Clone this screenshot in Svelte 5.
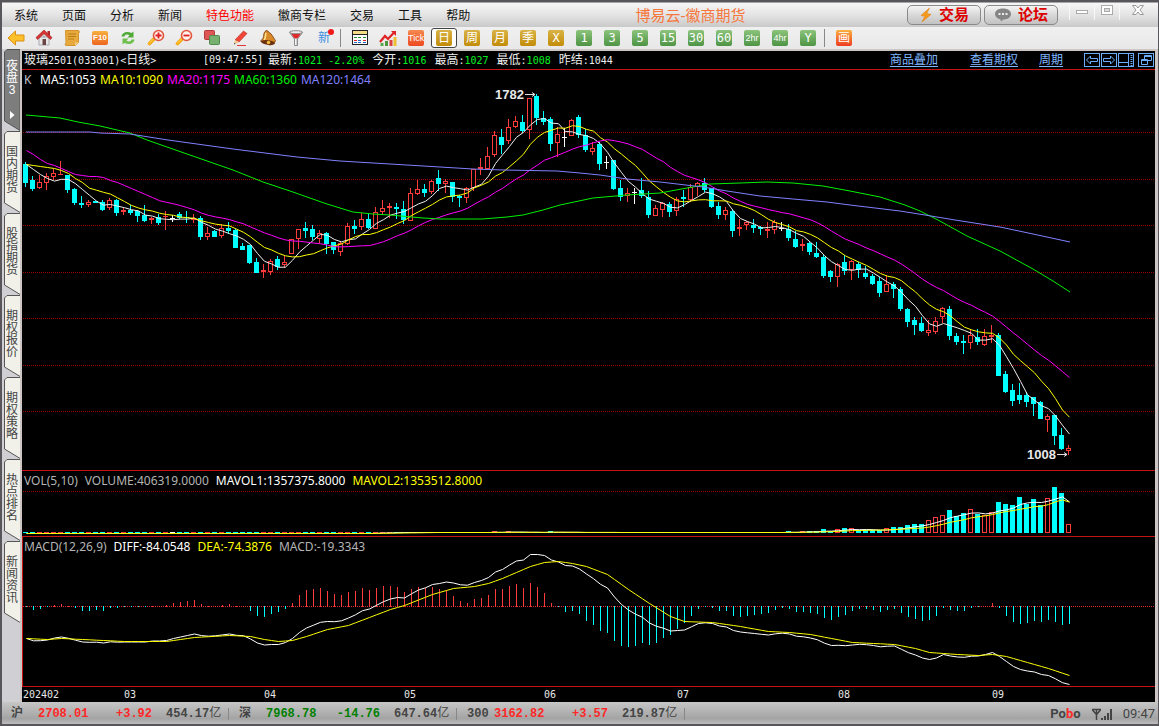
<script>
  const menus = ['系统', '页面', '分析', '新闻', '特色功能', '徽商专栏', '交易', '工具', '帮助'];
  const tools = ['后退', '首页', '便签', 'F10', '刷新', '放大', '缩小', '叠加', '画线', '预警', '筛选', '新'];
  const periods = [
    ['Tick', 'tick'], ['日', 'gold'], ['周', 'gold'], ['月', 'gold'], ['季', 'gold'], ['X', 'gold'],
    ['1', 'green'], ['3', 'green'], ['5', 'green'], ['15', 'green'], ['30', 'green'], ['60', 'green'],
    ['2hr', 'green'], ['4hr', 'green'], ['Y', 'green']
  ];
  const tabs = ['国内期货', '股指期货', '期权报价', '期权策略', '热点排名', '新闻资讯'];
  const quotes = [['最新:', '1021 -2.20%', 'up'], ['今开:', '1016', 'up'], ['最高:', '1027', 'up'], ['最低:', '1008', 'up'], ['昨结:', '1044', '']];
  const indexes = [
    ['沪', '2708.01', '+3.92', '454.17', 'rise'],
    ['深', '7968.78', '-14.76', '647.64', 'fall'],
    ['300', '3162.82', '+3.57', '219.87', 'rise']
  ];
  const months = [[1, '202402'], [102, '03'], [242, '04'], [382, '05'], [522, '06'], [655, '07'], [816, '08'], [970, '09']];

  // kind, high, body top, body bottom, low
  const bars = `c162,164,183,187 c176,180,189,191 r175,182,188,189 r173,176,183,190 r169,173,177,180 r161,174,175,175 c175,175,190,193 c188,189,203,205 c196,203,205,208 r200,202,205,207
c201,201,203,203 c200,202,210,211 r198,200,208,210 c199,200,213,216 r208,210,212,215 c205,210,213,215 c210,211,216,222 c205,215,221,222 r217,218,220,224 c214,217,223,225
r211,216,217,230 w215,218,219,222 c212,214,218,219 c211,217,218,223 r214,218,220,223 c216,218,237,240 r227,233,237,240 c230,231,237,237 r224,228,236,238 c222,228,231,234
c229,230,248,248 c243,246,250,250 c245,245,263,264 c258,262,273,273 r264,270,272,278 r259,261,272,275 c256,259,267,270 r256,262,265,268 r239,239,254,254 r229,229,239,249
c222,228,231,238 c225,229,237,240 r230,233,239,243 c232,233,244,254 c242,242,250,254 r241,243,252,256 r223,226,244,245 c220,226,229,234 r213,219,227,230 c214,219,228,229
r207,212,229,229 r200,208,212,215 r203,206,208,218 c203,207,209,219 c201,209,220,224 r188,193,221,221 r180,189,194,195 c184,189,193,197 r180,181,192,194 c170,178,184,191
r179,181,184,193 c182,182,197,202 c195,196,198,207 r187,188,198,203 r169,169,188,191 r158,167,169,175 r147,156,169,169 r131,135,155,157 c129,137,145,154 r119,127,141,144
r116,121,127,128 c115,122,131,133 r98,98,130,139 c94,96,118,125 c111,118,122,125 c117,119,144,151 r127,134,143,157 w128,137,138,147 r119,120,136,136 c115,117,135,138
c129,135,150,152 r142,148,152,155 c142,144,164,170 w156,162,163,169 c160,160,189,190 c180,188,197,201 r188,193,196,202 w188,192,193,204 c178,190,196,198 c191,197,215,218
r205,208,216,216 r202,203,210,217 c202,204,212,217 r197,199,211,216 c190,197,199,207 r184,187,200,202 r182,183,187,196 c178,183,190,192 c188,188,207,208 c202,206,215,219
r207,210,215,220 c209,211,231,237 r219,227,229,236 r221,222,225,230 c219,225,228,233 c226,227,229,235 r222,229,231,238 r220,222,230,234 w222,228,229,231 c224,229,238,241
c231,239,247,248 r239,244,246,251 c242,243,252,255 c242,253,257,258 c255,257,276,278 c270,271,277,282 r263,264,277,287 c255,262,271,275 r260,261,270,280 c262,264,270,278
c266,273,277,279 c274,276,284,285 c277,281,293,297 r275,284,292,292 c282,284,289,298 c287,289,309,311 c308,309,322,327 c317,320,325,335 c317,323,331,332 r320,330,333,336
r317,321,332,334 r307,308,317,323 c306,309,336,340 c333,336,342,345 c335,341,343,354 r329,335,343,349 c329,337,342,345 r329,336,345,346 r325,335,337,343 c333,335,376,376
c371,374,392,393 c384,390,401,406 c383,395,400,404 c392,395,402,407 c397,397,404,416 c401,402,419,419 r414,416,420,432 c415,415,436,445 c428,435,449,450 r445,448,451,455`
    .split(/\s+/)
    .map((s, i) => {
      const [high, top, bottom, low] = s.slice(1).split(',').map(Number);
      return { kind: s[0], high, top, bottom, low, x: 3 + 7 * i };
    });
  const colors = { c: '#00ffff', r: '#ff3c3c', w: '#ffffff' };

  const volTail = [2, 1, 2, 2, 2, 4, 2, 4, 5, 5, 3, 3, 3, 3, 5, 6, 6, 8, 9, 9, 13, 16, 18, 23, 17, 20, 24, 19, 18, 21, 31, 29, 28, 36, 29, 34, 28, 35, 46, 40, 9];
  const volumes = bars.map((_, i) => (i >= 109 ? volTail[i - 109] : [67, 69, 75].includes(i) ? 2 : i < 50 ? 0 : 1));

  const macd = [0, -4, -3, -1, 2, 3, 1, -2, -5, -5, -4, -5, -2, -2, -1, -1, -1, -1, 1, 1, 2, 4, 5, 6, 7, 3, 1, 1, 2, 3, 1, 1, -5, -10, -11, -8, -6, -3,
    4, 12, 17, 18, 19, 16, 13, 12, 15, 16, 19, 17, 19, 21, 21, 20, 15, 18, 20, 19, 20, 18, 17, 11, 6, 4, 8, 9, 12, 18, 18, 21, 23, 19, 24, 20, 14, 4,
    -1, -6, -5, -8, -15, -19, -25, -27, -35, -40, -41, -40, -37, -39, -37, -32, -29, -23, -17, -10, -3, -1, -2, -5, -5, -10, -11, -10, -9, -8, -7, -4, -2, -3,
    -6, -6, -7, -8, -12, -14, -11, -9, -5, -3, -3, -4, -6, -4, -3, -7, -11, -13, -15, -14, -10, -2, -4, -5, -5, -2, -1, 1, 4, -2, -10, -16, -18, -17, -15, -16, -14, -16, -19, -18];
  const deaKeys = [[0, 638], [3, 639], [5, 638], [8, 639], [11, 640], [14, 641], [20, 641], [24, 637], [29, 635], [32, 636], [34, 639], [36, 641], [38, 640], [40, 636], [43, 629], [46, 625],
    [49, 617], [52, 609], [54, 605], [58, 594], [61, 588], [64, 586], [66, 583], [68, 578], [70, 572], [72, 566], [74, 562], [76, 561], [78, 563], [80, 566], [83, 574], [86, 589],
    [89, 603], [92, 616], [94, 621], [98, 622], [102, 626], [106, 631], [109, 632], [112, 634], [115, 638], [118, 642], [121, 643], [124, 644], [127, 648], [129, 652], [133, 654],
    [136, 655], [138, 654], [140, 656], [143, 662], [146, 668], [149, 675]];
  const dea = bars.map((_, i) => {
    const k = Math.max(1, deaKeys.findIndex((d) => d[0] >= i));
    const [a, ya] = deaKeys[k - 1];
    const [b, yb] = deaKeys[k];
    return ya + ((yb - ya) * (i - a)) / (b - a);
  });

  const closes = bars.map((b) => (b.kind === 'c' ? b.bottom : b.top));
  const average = (list, n, lead = []) =>
    list.map((_, i) => {
      if (i < lead.length) return lead[i];
      const part = list.slice(Math.max(0, i - n + 1), i + 1);
      return part.reduce((s, v) => s + v, 0) / part.length;
    });
  const line = (list) => list.map((y, i) => `${4.5 + 7 * i},${(y + 0.5).toFixed(1)}`).join(' ');

  const ma5 = line(average(closes, 5, [164, 169, 174, 178]));
  const ma10 = line(average(closes, 10, [164, 165, 166, 167, 168, 170, 173, 178, 182]));
  const ma20 = line(average(closes, 20, [150, 154, 159, 163, 165, 168, 171, 174, 175, 176, 176, 177, 180, 182, 185, 188, 191, 194, 197]));
  const ma60 = '4,115 38,118 56,122 78,126 108,133 125,140 165,154 211,170 241,182 268,191 285,197 305,204 331,212 351,214 368,215 401,218 418,219 460,219 485,217 501,215 521,210 538,205 571,198 605,195 638,193 665,188 688,184 718,183 745,182 771,183 801,186 828,191 858,197 883,205 898,211 916,220 945,236 978,251 1011,269 1031,281 1048,292';
  const ma120 = '4,132 68,132 78,133 108,134 146,140 211,149 275,157 318,161 368,164 418,167 451,169 481,170 535,171 558,173 578,175 605,179 638,182 681,187 705,191 738,196 771,199 805,202 828,205 878,211 903,215 933,220 978,227 1011,234 1048,242';
  const mav1 = line(average(volumes, 5).map((v) => 533 - v));
  const mav2 = line(average(volumes, 10).map((v) => 533 - v));
  const deaLine = line(dea);
  const diffLine = line(dea.map((y, i) => y - macd[i] / 2));
</script>

<div class="window">
  <header class="titlebar">
    <nav>
      {#each menus as m}<button class:hot={m === '特色功能'}>{m}</button>{/each}
    </nav>
    <h1>博易云-徽商期货</h1>
    <div class="actions">
      <button class="pill"><svg width="14" height="16" viewBox="0 0 14 16"><path d="M10.500 1 2 8.500l4 .8L3 15l9-7.600-4.300-.8z" fill="#f59a1c" stroke="#e08010" stroke-width=".6" /></svg>交易</button>
      <button class="pill"><svg width="18" height="16" viewBox="0 0 18 16"><path d="M9 1.500c4.700 0 8 2.200 8 5.500s-3.300 5.500-8 5.500l-1.500 2-1.500-2.300C3 11.500 1 9.700 1 7c0-3.300 3.300-5.500 8-5.500z" fill="#858585" /><path d="M4.500 6h2v2h-2zM8 6h2v2H8zM11.500 6h2v2h-2z" fill="#eee" /></svg>论坛</button>
    </div>
    <div class="controls">
      <button aria-label="最小化"><svg width="14" height="14"><rect x="1.500" y="7.500" width="11" height="3" fill="#fff" stroke="#aaa" /></svg></button>
      <button aria-label="还原"><svg width="14" height="14"><rect x="1.500" y="2.500" width="11" height="9" fill="#fff" stroke="#aaa" /><rect x="4.500" y="5.500" width="5" height="3" fill="#ddd" stroke="#aaa" /></svg></button>
      <button class="close" aria-label="关闭"><svg width="14" height="14"><path d="M1.500 2.500h3.500l2 2.500 2-2.500h3.500L9 7l3.500 4.500H9L7 9l-2 2.500H1.500L5 7z" fill="#fff" stroke="#999" /></svg></button>
    </div>
  </header>

  <div class="toolbar">
    {#each tools as t, i}
      <button class="tool" aria-label={t}>
        {#if i === 11}
          <span class="new">新</span><i class="dot"></i>
        {:else if i === 3}
          <span class="f10">F10</span>
        {:else}
          <svg width="18" height="18" viewBox="0 0 18 18">
            {#if i === 0}
              <path d="M1 9 8.500 2v4H17v6H8.500v4z" fill="#fbc02a" stroke="#dc8f10" />
            {:else if i === 1}
              <path d="M4 8h10v8H4z" fill="#e8e8ea" stroke="#a9a9b0" /><path d="M12.500 2H15v5h-2.500z" fill="#b02a2a" /><path d="M9 1 1 8.500 2.500 10.500 9 4.800l6.500 5.700L17 8.500z" fill="#d63434" stroke="#9c1c1c" stroke-width=".6" /><path d="M7.500 10h3.500v6H7.500z" fill="#6b4444" /><circle cx="9" cy="7.500" r="1" fill="#9aa" />
            {:else if i === 2}
              <path d="M2.500 1.500h13c1 0 1 3 0 3v9l-3.500 3H3c-1 0-1-2 0-3z" fill="#e8aa3c" stroke="#d2942a" /><path d="M5 5h8M5 7.500h8M5 10h6" stroke="#b87c18" /><path d="M12 16.500v-3h3.500z" fill="#f8d488" />
            {:else if i === 4}
              <path d="M2.500 7.500C3 3.500 8 1.500 12.500 4L14.500 2.500v6H8.500l2-2.300C8 5 6 5.500 5.500 7.500z" fill="#4faa38" /><path d="M15.500 10.500c-.5 4-5.500 6-10 3.500L3.500 15.500v-6h6l-2 2.300c2.500 1.200 4.500.7 5-1.300z" fill="#6fc04c" />
            {:else if i === 5 || i === 6}
              <path d="M7.500 9.500 2.500 14.500" stroke="#f5a914" stroke-width="3.600" stroke-linecap="round" /><path d="M7 9.500 2 14.500" stroke="#ffdc54" stroke-width="1" /><circle cx="11.500" cy="6.500" r="5" fill="#fff1ec" stroke="#e2563e" stroke-width="1.600" /><path d={i === 5 ? 'M8.500 6.500h6M11.500 3.500v6' : 'M8.500 6.500h6'} stroke="#e02020" stroke-width="1.800" />
            {:else if i === 7}
              <rect x="1.500" y="1.500" width="10" height="9" rx="1" fill="#dd5555" stroke="#b43838" /><rect x="6.500" y="6.500" width="10" height="9" rx="1" fill="#77b070" stroke="#508a4c" />
            {:else if i === 8}
              <path d="M4 11 12.500 2l3.500 2.500L8 13z" fill="#ef4638" stroke="#b92920" stroke-width=".6" /><path d="M4 11l4 2-5 2.500z" fill="#f3c48d" /><path d="M3 15.500l1.500-.7-1-1z" fill="#333" /><path d="M6 16.500h9" stroke="#e03838" />
            {:else if i === 9}
              <path d="M6 2.500c1-1.500 3-1 3.500.5 4 2 4 5 7 8.500-.5 3-4 4.500-6 4.500L1.500 12C6 9 3.500 6 6 2.500z" fill="#d88a28" stroke="#74380c" stroke-width=".8" /><path d="M7 4c-1 3 0 5-2 7.500" stroke="#ffe290" stroke-width="1.500" fill="none" /><ellipse cx="9" cy="13.500" rx="7" ry="2.300" transform="rotate(8 9 13.500)" fill="#6a3010" /><circle cx="9.500" cy="13.500" r="1.800" fill="#f4ba3c" />
            {:else}
              <path d="M2.500 3.500 7.500 10v6.500h3V10l5-6.500z" fill="#c4c4c8" stroke="#78787e" stroke-width=".8" /><path d="M4 4.500h10l-3.500 4.700h-3z" fill="#e22828" /><ellipse cx="9" cy="3.200" rx="6.500" ry="1.500" fill="#eee" stroke="#888" /><path d="M8.700 10v6" stroke="#fff" />
            {/if}
          </svg>
        {/if}
      </button>
    {/each}
    <i class="sep"></i>
    <button class="tool" aria-label="报价表">
      <svg width="18" height="18" viewBox="0 0 18 18" shape-rendering="crispEdges"><rect x="1.500" y="1.500" width="15" height="14" fill="#fff" stroke="#222" /><path d="M2 2h14v3H2z" fill="#f4dc84" /><path d="M2 5.500h14" stroke="#222" /><path d="M3 8.500h3M7 8.500h3" stroke="#20902c" /><path d="M12 8.500h3" stroke="#20902c" /><path d="M3 11.500h3M12 11.500h3" stroke="#d22" /><path d="M7 11.500h3" stroke="#26c" /><path d="M3 13.500h3M7 13.500h3M12 13.500h3" stroke="#26c" /></svg>
    </button>
    <button class="tool" aria-label="走势">
      <svg width="18" height="18" viewBox="0 0 18 18"><path d="M1.500 14h3v3h-3z" fill="#58a848" /><path d="M6 12h3v5H6z" fill="#4e9840" /><path d="M10.500 11h3v6h-3z" fill="#d84040" /><path d="M14.500 8h3v9h-3z" fill="#eebe34" /><path d="M1 13 6 7l3 3 6.500-7" fill="none" stroke="#e02424" stroke-width="2.200" /><path d="M12 2h5v5z" fill="#e02424" /></svg>
    </button>
    {#each periods as [label, tone]}
      <button class="tool" class:selected={label === '日'}><span class="chip {tone}" class:small={label.length > 2}>{label}</span></button>
    {/each}
    <i class="sep"></i>
    <button class="tool"><span class="chip draw">画</span></button>
  </div>

  <div class="body">
    <aside>
      <button class="tab active">
        <svg width="16" height="82"><path d="M16 .5H3L.5 3v69L16 81.500z" fill="#7d7d7d" stroke="#555" /></svg>
        <span>夜盘3</span>
        <svg class="play" width="5" height="8"><path d="M0 0 4.500 4 0 8z" fill="#fff" /></svg>
      </button>
      {#each tabs as t}
        <button class="tab">
          <svg width="16" height="82"><path d="M17 .5H3L.5 3v69L17 82" fill="#f1f1ea" stroke="#555" /></svg>
          <span>{t}</span>
        </button>
      {/each}
    </aside>

    <main>
      <div class="info">
        <span class="name">玻璃<b>2501(033001)&lt;</b>日线<b>&gt;</b></span>
        <b class="time">[09:47:55]</b>
        {#each quotes as [k, v, cls]}<span>{k.slice(0, 2)}<b>:</b><b class={cls}>{v}</b></span>{/each}
        <div class="links">
          <a href="#overlay">商品叠加</a><a href="#options">查看期权</a><a class="near" href="#period">周期</a>
          <div class="boxes">
            <button aria-label="左移"><svg width="16" height="15"><rect x=".5" y=".5" width="15" height="13" /><path d="M2.500 7 6.500 3v2.500h7v3h-7V11z" /></svg></button>
            <button aria-label="右移"><svg width="16" height="15"><rect x=".5" y=".5" width="15" height="13" /><path d="M13.500 7l-4-4v2.500h-7v3h7V11z" /></svg></button>
            <button aria-label="侧栏"><svg width="16" height="15"><rect x=".5" y=".5" width="15" height="13" /><path d="M1 9.500h9.500M10.500 1v12" /><path d="M13.500 2v11" stroke-dasharray="1 1" stroke-width="2" /></svg></button>
            <button class="last" aria-label="窗口"><svg width="16" height="15"><rect x=".5" y=".5" width="15" height="13" /><path d="M6.500 6V2.500h7v5H10M6 3.500h8M3.500 6.500h6v5h-6zM3 7.500h7" /></svg></button>
          </div>
        </div>
      </div>

      <section class="panel">
        <svg width="100%" height="400">
          <g transform="translate(0,-70)">
            {#each [132, 179, 225, 272, 318, 365, 411] as y}
              <line x1="1" x2="100%" y1={y + 0.5} y2={y + 0.5} stroke="#a00000" stroke-dasharray="1 1" />
            {/each}
            <g shape-rendering="crispEdges">
              {#each bars as b}
                <rect x={b.x} y={b.high} width="1" height={b.low - b.high} fill={colors[b.kind]} />
                {#if b.kind === 'r' && b.bottom - b.top > 2}
                  <rect x={b.x - 1.5} y={b.top + 0.5} width="4" height={b.bottom - b.top - 1} fill="#000" stroke={colors.r} />
                {:else}
                  <rect x={b.x - 2} y={b.top} width="5" height={b.bottom - b.top} fill={colors[b.kind]} />
                {/if}
              {/each}
            </g>
            <g fill="none">
              <polyline points={ma5} stroke="#f0f0f0" />
              <polyline points={ma10} stroke="#ffff00" />
              <polyline points={ma20} stroke="#ff00ff" />
              <polyline points={ma60} stroke="#00f000" />
              <polyline points={ma120} stroke="#8080ff" />
              <path d="M503 94.500h10M510 92.500l3 2-3 2M1035 454.500h10M1042 452.500l3 2-3 2" stroke="#ddd" />
            </g>
            <text class="peak" x="473" y="99">1782</text>
            <text class="peak" x="1005" y="459">1008</text>
          </g>
        </svg>
        <div class="legend"><span class="k">K</span><span class="white">MA5:1053</span><span class="yellow">MA10:1090</span><span class="magenta">MA20:1175</span><span class="lime">MA60:1360</span><span class="violet">MA120:1464</span></div>
      </section>

      <section class="panel">
        <svg width="100%" height="65">
          <g transform="translate(0,-471)">
            <line x1="1" x2="100%" y1="491.5" y2="491.5" stroke="#a00000" stroke-dasharray="1 1" />
            <g shape-rendering="crispEdges">
              {#each bars as b, i}
                {@const h = Math.max(1, volumes[i])}
                {#if b.kind === 'r' && h > 2}
                  <rect x={b.x - 1.5} y={533.5 - h} width="4" height={h - 1} fill="#000" stroke={colors.r} />
                {:else}
                  <rect x={b.x - 2} y={533 - h} width="5" height={h} fill={colors[b.kind]} />
                {/if}
              {/each}
            </g>
            <polyline points={mav1} fill="none" stroke="#fff" />
            <polyline points={mav2} fill="none" stroke="#ffff00" />
          </g>
        </svg>
        <div class="legend wide"><span>VOL(5,10)</span><span>VOLUME:406319.0000</span><span class="white">MAVOL1:1357375.8000</span><span class="yellow">MAVOL2:1353512.8000</span></div>
      </section>

      <section class="panel focus">
        <svg width="100%" height="149">
          <g transform="translate(0,-537)">
            <line x1="1" x2="100%" y1="606.5" y2="606.5" stroke="#e02828" stroke-dasharray="1 1" />
            {#each macd as v, i}
              <rect x={4 + 7 * i} y={v > 0 ? 607 - v : 606} width="1" height={Math.max(1, Math.abs(v))} fill={v > 0 ? colors.r : colors.c} />
            {/each}
            <polyline points={diffLine} fill="none" stroke="#fff" />
            <polyline points={deaLine} fill="none" stroke="#ffff00" />
          </g>
        </svg>
        <div class="legend wide"><span>MACD(12,26,9)</span><span class="white">DIFF:-84.0548</span><span class="yellow">DEA:-74.3876</span><span>MACD:-19.3343</span></div>
      </section>

      <svg class="axis" width="100%" height="15">
        {#each months as [x, label]}<text {x} y="11">{label}</text>{/each}
      </svg>
    </main>
  </div>

  <footer>
    {#each indexes as [name, value, change, amount, cls]}
      <div class="index">
        <span class="label">{name}</span><span class={cls}>{value}</span><span class="change {cls}">{change}</span><span class="amount">{amount}<i>亿</i></span>
      </div>
    {/each}
    <div class="status">
      <strong>Po<em>b</em>o</strong>
      <svg width="22" height="13" viewBox="0 0 22 13"><path d="M1 1.500h9M1.500 2 5.500 6.500 9.500 2M5.500 1v11" fill="none" stroke="#444" stroke-width="1.500" /><path d="M10 10h2v2h-2zM13 8h2v4h-2zM16 5h2v7h-2zM19 1h2v11h-2z" fill="#444" /></svg>
      <time>09:47</time>
    </div>
  </footer>
</div>

<style>
  :global(body) { margin: 0; background: #000; }
  .window {
    display: flex; flex-direction: column; min-height: 100vh; box-sizing: border-box;
    border: 2px solid #58565a; border-right-width: 1px; background: #d2d2d4;
    font: 12px/16px "Liberation Sans", "Noto Sans CJK SC", sans-serif; color: #111;
  }
  button { appearance: none; border: 0; margin: 0; padding: 0; background: none; font: inherit; color: inherit; }
  svg { display: block; flex: none; }

  .titlebar {
    display: flex; align-items: center; height: 24px; border-top: 1px solid #a6a6a6;
    background: linear-gradient(#f6f6f6, #e4e4e4 50%, #c9c9c9);
  }
  nav { display: flex; gap: 24px; padding: 2px 0 0 12px; }
  nav button { white-space: nowrap; }
  .hot { color: #f00; }
  h1 { flex: 1; margin: 0; padding: 2px 0 0 4px; font: 15px/20px "Liberation Sans", "Noto Sans CJK SC", sans-serif; color: #f5773c; text-align: center; white-space: nowrap; }
  .actions { display: flex; gap: 3px; }
  .pill {
    display: flex; align-items: center; justify-content: center; gap: 6px; box-sizing: border-box; width: 74px; height: 20px;
    border: 1px solid #8a8a8a; border-radius: 5px; background: linear-gradient(#f4f4f4, #d8d8d8 50%, #c2c2c2);
    font-size: 15px; font-weight: 700; line-height: 18px; color: #dc0000;
  }
  .controls { display: flex; align-self: flex-start; margin: 0 2px 0 11px; }
  .controls button { display: flex; justify-content: center; width: 25px; height: 17px; border-left: 1px solid #f8f8f8; box-sizing: border-box; }
  .controls .close { width: 37px; }

  .toolbar { display: flex; align-items: center; height: 22px; background: linear-gradient(#f0f0f0, #e8e8e8); }
  .tool { position: relative; display: flex; align-items: center; justify-content: center; width: 28px; height: 20px; }
  .tool.selected::before { content: ""; position: absolute; inset: 0 1px; border: 1px solid #444; border-radius: 3px; background: #fff; }
  .sep { width: 1px; height: 18px; margin: 0 5px 0 2px; background: #888; }
  .new { font-size: 12px; color: #3f8fe0; }
  .dot { position: absolute; top: 1px; right: 4px; width: 6px; height: 6px; border-radius: 50%; background: #f01818; }
  .f10 { width: 16px; height: 14px; border-radius: 2px; background: linear-gradient(#f8b040, #ee6420); font: 700 8px/14px "Liberation Sans", sans-serif; color: #fff; text-align: center; }
  .chip {
    position: relative; width: 16px; height: 16px; border-radius: 2px; overflow: hidden;
    font: 12px/16px "DejaVu Sans Mono", "Noto Sans CJK SC", monospace; color: #fff; text-align: center; white-space: nowrap;
  }
  .gold { background: linear-gradient(#d9b346, #c28c08); }
  .green { background: linear-gradient(#8cc47c, #4e9444); }
  .tick { background: linear-gradient(#f58a50, #ee4a20); }
  .draw { background: linear-gradient(#fab040, #ee3c20); }
  .small { font: 9px/16px "Liberation Sans", sans-serif; }

  .body { display: flex; flex: 1; }
  aside { display: flex; flex-direction: column; width: 16px; padding-left: 2px; background: #d0d0d4; }
  .tab { display: grid; justify-items: center; align-items: start; height: 82px; color: #444; }
  .tab > * { grid-area: 1 / 1; }
  .tab span { width: 12px; margin-top: 15px; line-height: 12px; word-break: break-all; }
  .tab.active { color: #fff; }
  .tab.active span { margin-top: 11px; }
  .tab .play { margin-top: 62px; }

  main { flex: 1; min-width: 0; background: #000; border: solid #cdc6c4; border-width: 2px 3px 0 2px; }
  .info { display: flex; height: 18px; padding: 0 1px 0 2px; border-bottom: 1px solid #c41414; line-height: 18px; color: #eee; white-space: nowrap; gap: 8px; }
  .info b { font: 10px/18px "DejaVu Sans Mono", monospace; }
  .info .name { width: 171px; }
  .info .up { color: #00f020; }
  .info > .time { width: 57px; }
  .links { display: flex; margin-left: auto; align-items: center; }
  .links a { margin-right: 32px; color: #80b8ff; text-decoration: underline; text-underline-offset: 2px; }
  .links a:nth-child(2), .links .near { margin-right: 21px; }
  .boxes { display: flex; gap: 1px; }
  .boxes svg { fill: none; stroke: #6cacf8; }
  .boxes .last { margin-left: 3px; }

  .panel { display: grid; border-bottom: 1px solid #c41414; }
  .panel > * { grid-area: 1 / 1; }
  .panel > svg { overflow: hidden; }
  .focus { box-shadow: inset 1px 0 #c41414; }
  .legend { display: flex; gap: 4px; align-self: start; padding: 1px 2px; font: 12px/17px "Noto Sans", sans-serif; color: #b4b4b4; white-space: nowrap; }
  .legend.wide { gap: 7px; }
  .k { width: 12px; color: #c0c0d0; }
  .legend .white { color: #fff; }
  .yellow { color: #ff0; }
  .magenta { color: #f0f; }
  .lime { color: #00f000; }
  .violet { color: #8080ff; }
  .peak { font: 700 13px "Liberation Sans", sans-serif; fill: #e8e8e8; }
  .axis text { font: 10px "DejaVu Sans Mono", monospace; fill: #e8e8e8; }

  footer {
    display: flex; align-items: center; height: 22px; padding: 2px 3px 0 9px; box-sizing: border-box;
    background: linear-gradient(#c6c6c6, #a4a4a4 75%, #bcbcbc);
    font: 700 12px/16px "Liberation Mono", "Noto Sans CJK SC", monospace; color: #444;
  }
  .index { display: grid; grid-template-columns: 27px 50px 64px 69px; width: 218px; margin-right: 10px; background: linear-gradient(#888, #888) right center / 1px 12px no-repeat; white-space: nowrap; }
  .change { text-align: right; }
  .amount { padding-left: 14px; }
  .amount i { font-style: normal; font-weight: 400; }
  .rise { color: #ff2828; }
  .fall { color: #008000; }
  .status { display: flex; align-items: center; gap: 10px; margin-left: auto; font: 13px/16px Roboto, sans-serif; }
  .status em { font-style: normal; color: #ff2828; }
</style>
